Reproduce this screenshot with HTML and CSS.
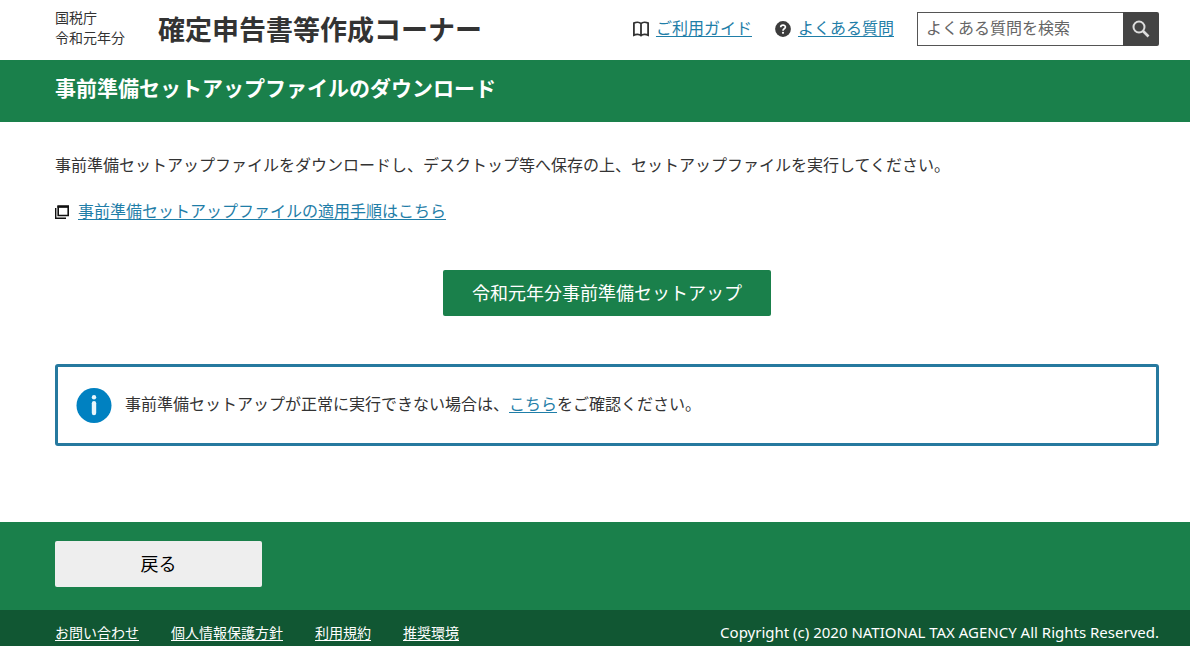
FILE: index.html
```html
<!DOCTYPE html>
<html lang="ja">
<head>
<meta charset="utf-8">
<meta name="viewport" content="width=device-width, initial-scale=1">
<title>確定申告書等作成コーナー</title>
<link rel="stylesheet" href="styles.css">
</head>
<body>
<header class="site-header">
  <p class="agency">国税庁<br>令和元年分</p>
  <p class="site-title">確定申告書等作成コーナー</p>
  <nav class="help-nav">
    <span class="help-item">
      <svg class="icon" viewBox="0 0 16 16" aria-hidden="true"><path d="M8 2.600C6.400 1 3 1 .9 2.100v12c2-1 5.500-1 7.100.4 1.600-1.400 5.100-1.400 7.100-.4v-12C13 1 9.600 1 8 2.600v11.800" fill="none" stroke="#333" stroke-width="1.800"/></svg>
      <a class="link" href="#">ご利用ガイド</a>
    </span>
    <span class="help-item">
      <svg class="icon" viewBox="0 0 16 16" aria-hidden="true"><circle cx="8" cy="8" r="7.900" fill="#3c3c3c"/><path d="M5.700 6.300C5.700 3.300 10.400 3.400 10.400 6.100 10.400 7.900 8 7.700 8 9.700" fill="none" stroke="#fff" stroke-width="1.700"/><circle cx="8" cy="11.800" r="1.100" fill="#fff"/></svg>
      <a class="link" href="#">よくある質問</a>
    </span>
  </nav>
  <form class="search" role="search">
    <input class="search-input" type="text" placeholder="よくある質問を検索" aria-label="よくある質問を検索">
    <button class="search-button" type="button" aria-label="検索">
      <svg class="search-icon" viewBox="0 0 18 18" aria-hidden="true"><circle cx="7" cy="7" r="5.500" fill="none" stroke="#ddd" stroke-width="2"/><path d="M11 11l5.500 5.500" stroke="#ddd" stroke-width="2.600"/></svg>
    </button>
  </form>
</header>
<div class="page-heading">
  <h1 class="page-title">事前準備セットアップファイルのダウンロード</h1>
</div>
<main class="content">
  <p class="lead">事前準備セットアップファイルをダウンロードし、デスクトップ等へ保存の上、セットアップファイルを実行してください。</p>
  <p class="guide">
    <svg class="window-icon" viewBox="0 0 14 14" aria-hidden="true"><path d="M.7 3v10.300H11" fill="none" stroke="#111" stroke-width="1.400"/><path d="M3.200 1.500h10v9h-10z" fill="#fff" stroke="#111" stroke-width="1.600"/><path d="M2.400.300H14v2.500H2.400z" fill="#111"/></svg>
    <a class="link" href="#">事前準備セットアップファイルの適用手順はこちら</a>
  </p>
  <button class="download-button" type="button">令和元年分事前準備セットアップ</button>
  <div class="notice">
    <svg class="info-icon" viewBox="0 0 36 36" aria-hidden="true"><circle cx="18" cy="18.500" r="17.500" fill="#0081c1"/><circle cx="18" cy="10.200" r="2.200" fill="#e8f6fc"/><path d="M18 16.300v9.800" stroke="#e8f6fc" stroke-width="4.400" stroke-linecap="round"/></svg>
    <p class="notice-text">事前準備セットアップが正常に実行できない場合は、<a class="link" href="#">こちら</a>をご確認ください。</p>
  </div>
</main>
<div class="actions">
  <button class="back-button" type="button">戻る</button>
</div>
<footer class="site-footer">
  <nav class="footer-nav">
    <a class="footer-link" href="#">お問い合わせ</a>
    <a class="footer-link" href="#">個人情報保護方針</a>
    <a class="footer-link" href="#">利用規約</a>
    <a class="footer-link" href="#">推奨環境</a>
  </nav>
  <small class="copyright">Copyright (c) 2020 NATIONAL TAX AGENCY All Rights Reserved.</small>
</footer>
</body>
</html>
```
FILE: styles.css
```css
*, *::before, *::after { box-sizing: border-box; }

body {
  margin: 0;
  background: #fff;
  color: #333;
  font: 16px/24px "Noto Sans CJK JP", sans-serif;
}

p, h1 { margin: 0; }

button, input { font-family: inherit; }

button { border: 0; cursor: pointer; }

svg { display: block; flex: none; }

.link { color: #1f7ea8; text-underline-offset: 2px; text-decoration-thickness: 1px; }

.site-header {
  display: flex;
  align-items: center;
  min-height: 60px;
  padding: 0 31px 2px 55px;
}

.agency { padding-bottom: 4px; font-size: 14px; line-height: 20px; white-space: nowrap; }

.site-title {
  margin-left: 33px;
  font-size: 27px;
  line-height: 40px;
  font-weight: 700;
  white-space: nowrap;
}

.help-nav { display: flex; gap: 23px; margin-left: auto; white-space: nowrap; }

.help-item { display: flex; align-items: center; gap: 7px; }

.help-item .link { padding-bottom: 4px; }

.icon { width: 16px; height: 16px; }

.search { display: flex; width: 242px; height: 34px; margin-left: 23px; }

.search-input {
  flex: 1;
  min-width: 0;
  padding: 0 8px 4px;
  border: 1px solid #555;
  border-right: 0;
  border-radius: 0;
  font-size: 16px;
  color: #333;
}

.search-input::placeholder { color: #666; opacity: 1; }

.search-button {
  display: grid;
  place-items: center;
  width: 36px;
  padding: 0;
  border-radius: 0 2px 2px 0;
  background: #444;
}

.search-icon { width: 18px; height: 18px; }

.page-heading { padding: 12px 31px 20px 55px; background: #1a804b; }

.page-title { color: #fff; font-size: 21px; line-height: 30px; font-weight: 700; }

.content { padding: 30px 31px 76px 55px; }

.guide { display: flex; align-items: center; gap: 9px; margin-top: 22px; }

.window-icon { width: 14px; height: 14px; margin-top: 4px; }

.download-button {
  display: block;
  width: 328px;
  height: 46px;
  margin: 48px auto;
  padding: 0 0 2px;
  border-radius: 2px;
  background: #1a804b;
  color: #fff;
  font-size: 18px;
}

.notice {
  display: flex;
  align-items: center;
  gap: 13px;
  min-height: 82px;
  padding: 16px 18px;
  border: 3px solid #26799f;
  border-radius: 3px;
}

.notice-text { padding-bottom: 4px; }

.info-icon { width: 36px; height: 36px; }

.actions { padding: 19px 31px 23px 55px; background: #1a804b; }

.back-button {
  display: block;
  width: 207px;
  height: 46px;
  padding: 0 0 2px;
  border-radius: 2px;
  background: #eee;
  color: #000;
  font-size: 18px;
}

.site-footer {
  display: flex;
  flex-wrap: wrap;
  justify-content: space-between;
  padding: 12px 31px 4px 55px;
  background: #115733;
  color: #fff;
  font-size: 14px;
  line-height: 20px;
}

.footer-nav { display: flex; flex-wrap: wrap; gap: 32px; }

.footer-link { color: #fff; text-underline-offset: 2px; }

.copyright { font-family: "Noto Sans", sans-serif; font-size: 15px; }
```
